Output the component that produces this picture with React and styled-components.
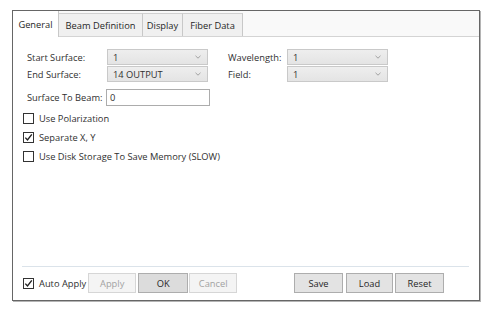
import React from 'react'
import styled, { createGlobalStyle } from 'styled-components'

const Global = createGlobalStyle`
  html, body {
    margin: 0;
    padding: 0;
    background: #ffffff;
  }
  body {
    font-family: "Open Sans", "Noto Sans", sans-serif;
    font-size: 9.3px;
    color: #303030;
  }
`

function Chevron() {
  return (
    <svg width="6" height="4" viewBox="0 0 6 4">
      <path d="M0.5 0.8 L3 3.2 L5.5 0.8" fill="none" stroke="#9a9a9a" strokeWidth="0.9" />
    </svg>
  )
}

function Check({ checked }) {
  return (
    <Box>
      {checked && (
        <svg width="9" height="9" viewBox="0 0 9 9">
          <path d="M1.3 4.6 L3.5 7 L7.8 1.4" fill="none" stroke="#222" strokeWidth="1.4" />
        </svg>
      )}
    </Box>
  )
}

function App() {
  return (
    <>
      <Global />
      <Page>
        <Frame>
          <TabStrip>
            <Tab selected style={{ width: 46 }}>General</Tab>
            <Tab style={{ width: 84 }}>Beam Definition</Tab>
            <Tab style={{ width: 40 }}>Display</Tab>
            <Tab style={{ width: 60 }}>Fiber Data</Tab>
          </TabStrip>
          <Content>
            <FieldRow>
              <Label width={80}>Start Surface:</Label>
              <Select>
                <span>1</span>
                <Chevron />
              </Select>
              <Label width={59} gap={20}>Wavelength:</Label>
              <Select>
                <span>1</span>
                <Chevron />
              </Select>
            </FieldRow>
            <FieldRow>
              <Label width={80}>End Surface:</Label>
              <Select>
                <span>14 OUTPUT</span>
                <Chevron />
              </Select>
              <Label width={59} gap={20}>Field:</Label>
              <Select>
                <span>1</span>
                <Chevron />
              </Select>
            </FieldRow>
            <FieldRow spaced>
              <Label width={79}>Surface To Beam:</Label>
              <TextInput>0</TextInput>
            </FieldRow>
            <Checks>
              <CheckRow>
                <Check />
                <span>Use Polarization</span>
              </CheckRow>
              <CheckRow>
                <Check checked />
                <span>Separate X, Y</span>
              </CheckRow>
              <CheckRow>
                <Check />
                <span>Use Disk Storage To Save Memory (SLOW)</span>
              </CheckRow>
            </Checks>
            <Spacer />
            <Separator />
            <BottomBar>
              <ButtonGroup>
                <CheckRow>
                  <Check checked />
                  <span>Auto Apply</span>
                </CheckRow>
                <Button disabled width={48} ml={2}>Apply</Button>
                <Button primary width={50} ml={2}>OK</Button>
                <Button disabled width={48} ml={1}>Cancel</Button>
              </ButtonGroup>
              <ButtonGroup>
                <Button width={49}>Save</Button>
                <Button width={47} ml={3}>Load</Button>
                <Button width={49} ml={2}>Reset</Button>
              </ButtonGroup>
            </BottomBar>
          </Content>
        </Frame>
      </Page>
    </>
  )
}

export default App

const Page = styled.div`
  width: 498px;
  height: 315px;
  padding: 10px 0 0 12px;
  box-sizing: border-box;
`

const Frame = styled.div`
  width: 468px;
  height: 291px;
  box-sizing: border-box;
  border: 1px solid #666666;
  box-shadow: 1px 1px 0 #b4b4b4;
  display: flex;
  flex-direction: column;
  background: #ffffff;
`

const TabStrip = styled.div`
  height: 26px;
  box-sizing: border-box;
  display: flex;
  align-items: flex-end;
  background: #f9f9f9;
  border-bottom: 1px solid #d4d4d4;
`

const Tab = styled.div`
  box-sizing: border-box;
  display: flex;
  align-items: center;
  justify-content: center;
  height: ${p => (p.selected ? '26px' : '23px')};
  margin-bottom: ${p => (p.selected ? '-1px' : '0')};
  background: ${p => (p.selected ? '#ffffff' : '#f0f0f0')};
  border-top: ${p => (p.selected ? 'none' : '1px solid #d0d0d0')};
  border-right: 1px solid #c8c8c8;
  color: #262626;
  white-space: nowrap;
`

const Content = styled.div`
  flex: 1;
  display: flex;
  flex-direction: column;
  padding: 12px 0 7px 0;
`

const FieldRow = styled.div`
  display: flex;
  align-items: center;
  height: 16px;
  margin-bottom: ${p => (p.spaced ? '0' : '1px')};
  margin-top: ${p => (p.spaced ? '6px' : '0')};
  padding-left: 14px;
`

const Label = styled.div`
  width: ${p => p.width}px;
  margin-left: ${p => p.gap || 0}px;
  flex-shrink: 0;
  white-space: nowrap;
`

const Select = styled.div`
  width: 101px;
  height: 16px;
  box-sizing: border-box;
  display: flex;
  align-items: center;
  justify-content: space-between;
  padding: 0 6px 0 5px;
  background: linear-gradient(#eeeeee, #e4e4e4);
  border: 1px solid #c9c9c9;
`

const TextInput = styled.div`
  width: 104px;
  height: 17px;
  box-sizing: border-box;
  display: flex;
  align-items: center;
  padding-left: 3px;
  background: #ffffff;
  border: 1px solid #acacac;
`

const Checks = styled.div`
  display: flex;
  flex-direction: column;
  margin-top: 4px;
  padding-left: 10px;
`

const CheckRow = styled.div`
  display: flex;
  align-items: center;
  height: 19px;
  gap: 5px;
  white-space: nowrap;
`

const Box = styled.div`
  width: 11px;
  height: 11px;
  box-sizing: border-box;
  border: 1px solid #333333;
  background: #ffffff;
  display: flex;
  align-items: center;
  justify-content: center;
`

const Spacer = styled.div`
  flex: 1;
`

const Separator = styled.div`
  height: 1px;
  background: #dbe3ea;
  margin: 0 10px 0 9px;
`

const BottomBar = styled.div`
  display: flex;
  justify-content: space-between;
  align-items: center;
  margin-top: 6px;
  padding: 0 35px 0 10px;
`

const ButtonGroup = styled.div`
  display: flex;
  align-items: center;
`

const Button = styled.div`
  width: ${p => p.width}px;
  height: 20px;
  margin-left: ${p => p.ml || 0}px;
  box-sizing: border-box;
  display: flex;
  align-items: center;
  justify-content: center;
  background: ${p => (p.disabled ? '#f4f4f4' : p.primary ? '#dcdcdc' : '#e3e3e3')};
  border: 1px solid ${p => (p.disabled ? '#d6d6d6' : '#adadad')};
  color: ${p => (p.disabled ? '#a2a2a2' : '#262626')};
`
